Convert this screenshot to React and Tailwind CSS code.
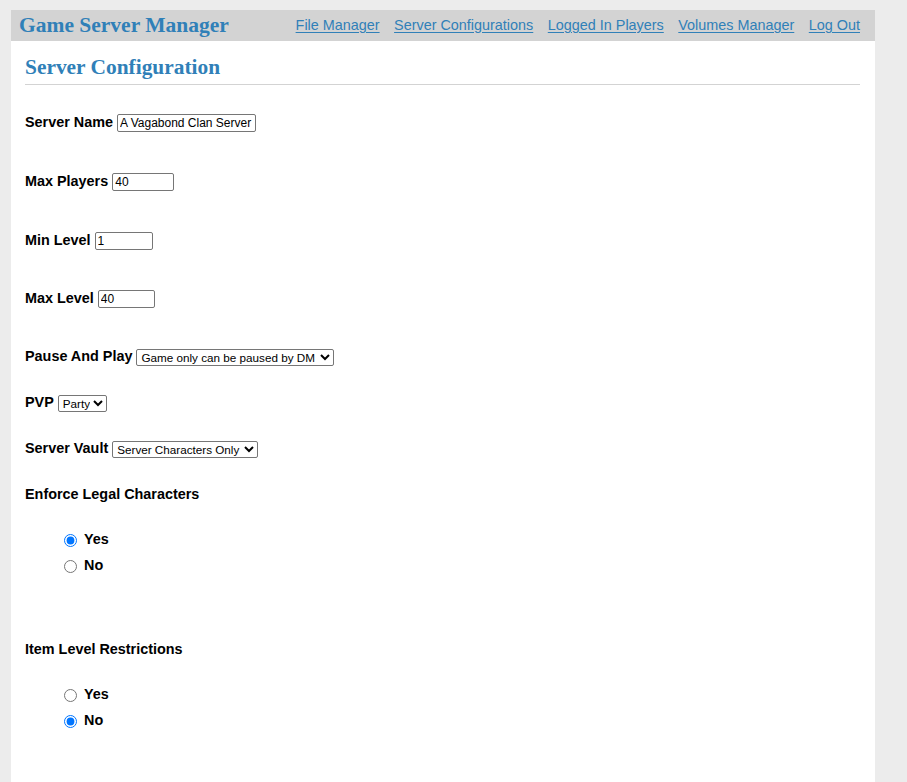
import React from "react";

const LINK = "text-[#3080b8] underline underline-offset-[2px]";

function Row({ label, mt, children }) {
  return (
    <div className={`flex items-center h-[20px] gap-[4px] ${mt}`}>
      <span className="font-bold">{label}</span>
      {children}
    </div>
  );
}

function Radio({ name, label, checked, mt }) {
  return (
    <label className={`flex items-center h-[20px] pl-[39px] gap-[7px] font-bold ${mt}`}>
      <input type="radio" name={name} defaultChecked={checked} className="w-[13px] h-[13px] m-0" />
      <span>{label}</span>
    </label>
  );
}

const inputCls =
  "h-[18px] border border-[#767676] rounded-[2px] bg-white px-[2px] text-[12px] text-black leading-none outline-none";
const selectCls =
  "h-[17px] border border-[#767676] rounded-[2px] bg-white p-0 text-[11.7px] text-black leading-none";

export default function App() {
  return (
    <div className="min-h-screen bg-[#ececec] pt-[10px] font-['Liberation_Sans',Arial,sans-serif] text-[14.4px] text-black">
      <div className="ml-[11px] w-[864px] bg-white min-h-[800px]">
        <header className="h-[31px] bg-[#d3d3d3] flex items-center justify-between pl-[8px] pr-[15px]">
          <h1 className="font-['Liberation_Serif','Times_New_Roman',serif] font-bold text-[21.5px] leading-none text-[#3080b8]">
            Game Server Manager
          </h1>
          <nav className="flex items-center gap-[14.5px] text-[14.4px]">
            <a href="#" className={LINK}>File Manager</a>
            <a href="#" className={LINK}>Server Configurations</a>
            <a href="#" className={LINK}>Logged In Players</a>
            <a href="#" className={LINK}>Volumes Manager</a>
            <a href="#" className={LINK}>Log Out</a>
          </nav>
        </header>
        <main className="pl-[14px] pr-[15px] pb-[60px]">
          <h2 className="mt-[14px] font-['Liberation_Serif','Times_New_Roman',serif] font-bold text-[21.4px] leading-[25px] text-[#3080b8]">
            Server Configuration
          </h2>
          <hr className="mt-[4px] border-0 border-t border-[#d3d3d3]" />

          <Row label="Server Name" mt="mt-[28px]">
            <input className={`${inputCls} w-[139px]`} defaultValue="A Vagabond Clan Server" />
          </Row>
          <Row label="Max Players" mt="mt-[39px]">
            <input className={`${inputCls} w-[62px]`} defaultValue="40" />
          </Row>
          <Row label="Min Level" mt="mt-[39px]">
            <input className={`${inputCls} w-[58px]`} defaultValue="1" />
          </Row>
          <Row label="Max Level" mt="mt-[38px]">
            <input className={`${inputCls} w-[57px]`} defaultValue="40" />
          </Row>
          <Row label="Pause And Play" mt="mt-[38px]">
            <select className={`${selectCls} w-[198px]`} defaultValue="dm">
              <option value="dm">Game only can be paused by DM</option>
              <option value="any">Anyone can pause</option>
            </select>
          </Row>
          <Row label="PVP" mt="mt-[26px]">
            <select className={`${selectCls} w-[49px]`} defaultValue="party">
              <option value="party">Party</option>
              <option value="none">None</option>
              <option value="full">Full</option>
            </select>
          </Row>
          <Row label="Server Vault" mt="mt-[26px]">
            <select className={`${selectCls} w-[146px]`} defaultValue="server">
              <option value="server">Server Characters Only</option>
              <option value="local">Local Characters</option>
            </select>
          </Row>

          <div className="mt-[26px] h-[20px] flex items-center font-bold">Enforce Legal Characters</div>
          <Radio name="legal" label="Yes" checked mt="mt-[25px]" />
          <Radio name="legal" label="No" mt="mt-[6px]" />

          <div className="mt-[64px] h-[20px] flex items-center font-bold">Item Level Restrictions</div>
          <Radio name="ilr" label="Yes" mt="mt-[25px]" />
          <Radio name="ilr" label="No" checked mt="mt-[6px]" />
        </main>
      </div>
    </div>
  );
}
